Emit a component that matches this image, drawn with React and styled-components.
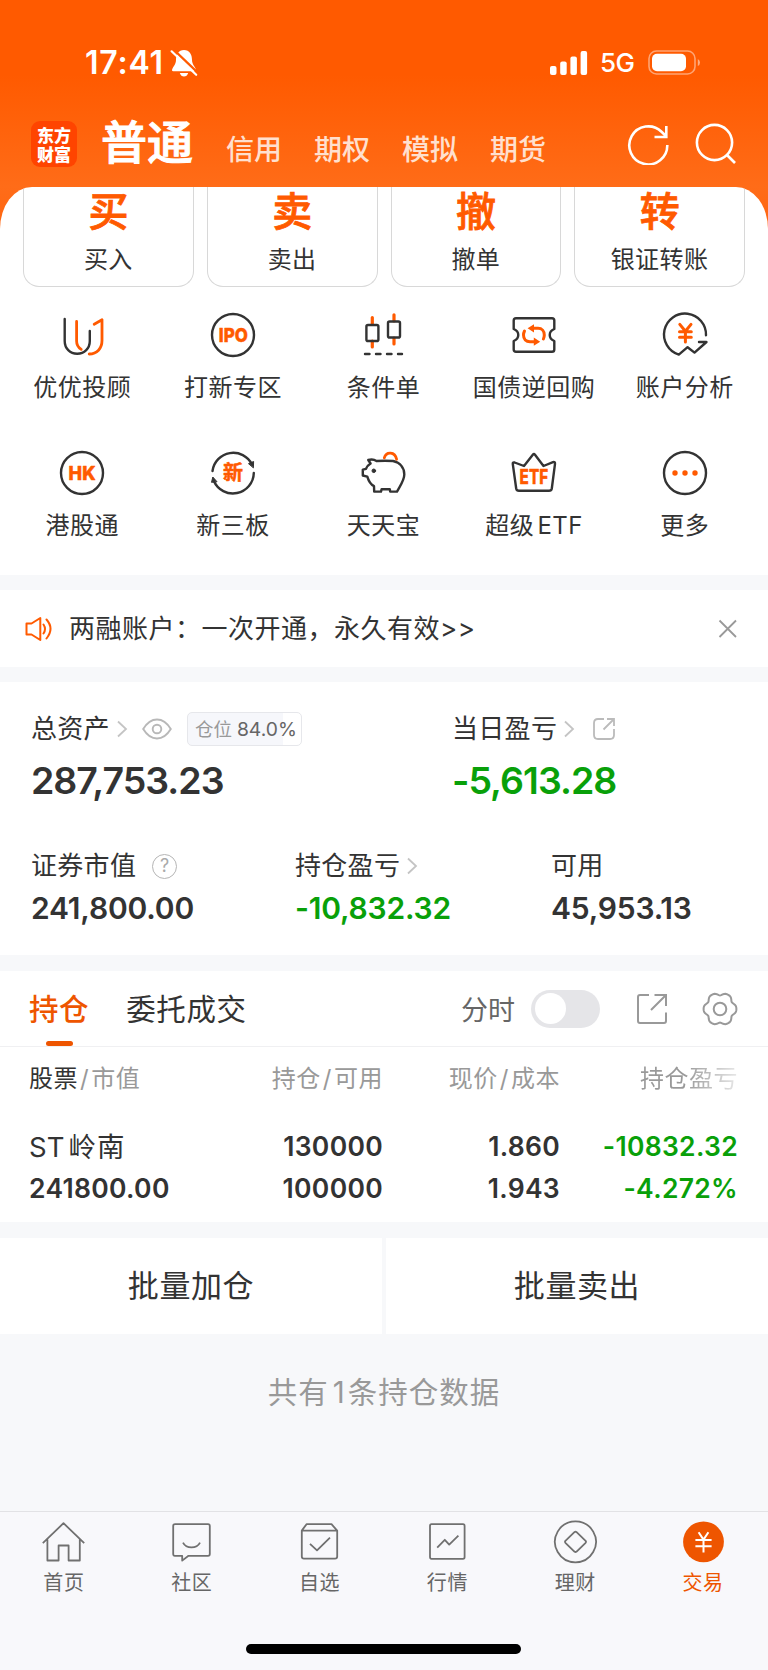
import React from 'react'
import { useState } from 'react'
import styled, { createGlobalStyle } from 'styled-components'

const orange = '#ff5a00'
const dark = '#333333'

const actions = [
  { mark: '买', label: '买入' },
  { mark: '卖', label: '卖出' },
  { mark: '撤', label: '撤单' },
  { mark: '转', label: '银证转账' },
]

const markets = ['信用', '期权', '模拟', '期货']

const CircleText = ({ text, width, x }) => (
  <>
    <circle cx="24" cy="24" r="21" stroke={dark} />
    <text x={x} y="31" textLength={width} lengthAdjust="spacingAndGlyphs" fontFamily="Inter, sans-serif" fontWeight="800" fontSize="19" fill={orange} stroke={orange} strokeWidth=".5">{text}</text>
  </>
)

const services = [
  {
    label: '优优投顾',
    icon: (
      <>
        <path d="M6.7 8V30C6.7 37.5 12 42.8 19.2 42.8S31.8 37.5 31.8 30V20" stroke={dark} />
        <path d="M18.6 10.5V30C18.6 34 20.4 36.6 23.2 38.4M36.2 13.2L44 8.8V29.5C44 37.5 39 42.8 31.2 43" stroke={orange} strokeWidth="2.8" />
      </>
    ),
  },
  { label: '打新专区', icon: <CircleText text="IPO" x="9.8" width="29" /> },
  {
    label: '条件单',
    icon: (
      <>
        <path d="M13.3 6.5V13M13.3 30V36M35 3.8V10M35 27V33" stroke={orange} strokeWidth="3.2" />
        <rect x="7.4" y="14" width="12" height="16" rx="1.6" stroke={dark} />
        <rect x="29" y="10.5" width="12" height="16" rx="1.6" stroke={dark} />
        <path d="M6 43H10.5M17 43H21.5M28 43H32.5M39 43H43" stroke={dark} strokeWidth="2.4" />
      </>
    ),
  },
  {
    label: '国债逆回购',
    icon: (
      <>
        <path d="M6 7.2H42Q44.3 7.2 44.3 9.5V18C38.2 20.5 38.2 27.5 44.3 30V38.5Q44.3 40.8 42 40.8H6Q3.7 40.8 3.7 38.5V30C9.8 27.5 9.8 20.5 3.7 18V9.5Q3.7 7.2 6 7.2Z" stroke={dark} />
        <g fill={orange} stroke="none">
          <path d="M17.6 17.3L24 13.2V21.4ZM30.2 30.7L23.8 26.6V34.8Z" />
        </g>
        <path d="M23 17.3H28C32 17.3 34.3 20 34.3 24Q34.3 26 33.4 28M25 30.7H20C16 30.7 13.5 28 13.5 24Q13.5 22 14.5 20" stroke={orange} strokeWidth="3" />
      </>
    ),
  },
  {
    label: '账户分析',
    icon: (
      <>
        <path d="M45 24.3A21 21 0 1 0 17.8 43.6L26.6 36.2L33.5 41.6L45.5 31H38" stroke={dark} />
        <path d="M18.8 13.4L24.4 20.3L30 13.4M24.4 20V31M18.5 20.8H30.3M18.5 26.3H30.3" stroke={orange} strokeWidth="3" />
      </>
    ),
  },
  { label: '港股通', icon: <CircleText text="HK" x="10.6" width="27" /> },
  {
    label: '新三板',
    icon: (
      <>
        <path d="M3.5 22A20.9 20.9 0 0 1 43 15.5M44.8 24A20.9 20.9 0 0 1 4.8 32" stroke={dark} />
        <path d="M39.8 14.5L44.6 12.5L44.4 18.5ZM2.6 33L3.8 28L7.8 32.5Z" fill={dark} stroke={dark} strokeWidth="1" />
        <text x="14" y="31.2" fontFamily="'Noto Sans CJK SC', sans-serif" fontWeight="700" fontSize="20" fill={orange} stroke={orange} strokeWidth=".5">新</text>
      </>
    ),
  },
  {
    label: '天天宝',
    icon: (
      <>
        <path d="M9.2 11Q14 9.5 17.5 12Q26 11.5 34 12C41.5 13.5 45.3 19 45.3 25.500C45.3 31 42.5 34.5 38 42.6H31.2L30.8 40.2H22.6L22 42.6H15.2L15 37.2Q10.5 35 8.3 27.7L3.8 26.5V20.6L7 19.8Q8.3 16.5 11.6 14.5Z" stroke={dark} />
        <circle cx="14.8" cy="21.8" r="1.8" fill={dark} stroke={dark} strokeWidth="1" />
        <path d="M25.3 8.8C27.2 2.3 36 2.4 37.6 10.3" stroke={orange} strokeWidth="2.8" />
      </>
    ),
  },
  {
    label: '超级 ETF',
    icon: (
      <>
        <path d="M4.6 13.5L14 17L22.8 5.8Q24 4.3 25 5.8L33.5 17L43 13.2Q45.2 12.6 45 14.8L41.8 39.5Q41.4 41.8 39 41.8H9Q6.6 41.8 6.2 39.5L2.8 15.2Q2.4 12.8 4.6 13.5Z" stroke={dark} />
        <text x="9.6" y="34.8" textLength="28.5" lengthAdjust="spacingAndGlyphs" fontFamily="Inter, sans-serif" fontWeight="800" fontSize="20" fill={orange} stroke={orange} strokeWidth=".4">ETF</text>
      </>
    ),
  },
  {
    label: '更多',
    icon: (
      <>
        <circle cx="24" cy="24" r="21" stroke={dark} />
        <g fill={orange} stroke="none">
          <circle cx="14" cy="24" r="2.7" />
          <circle cx="24" cy="24" r="2.7" />
          <circle cx="34" cy="24" r="2.7" />
        </g>
      </>
    ),
  },
]

const tabs = [
  { label: '首页', icon: <path d="M1.8 23.2L22.5 3.2L43.2 23.2M6.4 19.5V40.5H17.6V25.5H27.6V40.5H38.8V19.5" /> },
  { label: '社区', icon: <path d="M5.5 4.2H39Q40.8 4.2 40.8 6V34Q40.8 35.8 39 35.8H19.5L13.2 40.6V35.8H5.8Q4.2 35.8 4.2 34V6Q4.2 4.2 6 4.2M14 22.6Q16.5 27.4 22.5 27.4T31 22.6" /> },
  { label: '自选', icon: <path d="M9.5 4.2H34.5L40.2 10.6V36.5Q40.2 38.6 38 38.6H7Q4.8 38.6 4.8 36.5V10.6ZM4.8 10.6H40.2M13 23.8L20 30.4L33 17.6" /> },
  { label: '行情', icon: <path d="M6.5 4.2H38Q39.6 4.2 39.6 6V37Q39.6 38.8 38 38.8H6.5Q5 38.8 5 37V6Q5 4.2 6.5 4.2M12.2 27.6L19.8 19.8L24.2 24.6L33.4 15.6" /> },
  { label: '理财', icon: <path d="M22.5 1.3A20.5 20.5 0 1 1 22.4 1.3ZM21.4 12.2L12.4 20.8Q11.6 21.8 12.4 22.8L21.4 31.6Q22.5 32.4 23.6 31.6L32.6 22.8Q33.4 21.8 32.6 20.8L23.6 12.2Q22.5 11.2 21.4 12.2Z" /> },
  {
    label: '交易',
    active: true,
    icon: (
      <>
        <circle cx="22.5" cy="21.8" r="20.4" fill="#ee5500" stroke="none" />
        <path d="M17.6 12.2L22.5 19.6L27.4 12.2M22.5 19.5V32.6M14.4 20H30.6M14.4 26.2H30.6" stroke="#fff" strokeWidth="2" />
      </>
    ),
  },
]

// outline with six rounded teeth
const gearPath = () => {
  const points = []
  for (let a = 0; a < 360; a += 5) {
    const t = (a * Math.PI) / 180
    const r = 15.3 + 1.4 * Math.cos(6 * t) - 0.3 * Math.cos(12 * t)
    points.push(`${(18 + r * Math.cos(t)).toFixed(2)} ${(18 + r * Math.sin(t)).toFixed(2)}`)
  }
  return `M${points.join('L')}Z`
}

const Chevron = () => (
  <ChevronSvg viewBox="0 0 12 18"><path d="M2 1.5L10 9L2 16.5" /></ChevronSvg>
)

function StatusBar() {
  return (
    <Status>
      <Clock>17:41</Clock>
      <svg width="28" height="30" viewBox="0 0 28 30">
        <path d="M14 2C8.5 2 6 6.5 6 12C6 17 2 19.5 2 22.2Q2 23.3 3.3 23.3H24.7Q26 23.3 26 22.2C26 19.5 22 17 22 12C22 6.5 19.5 2 14 2ZM9.8 25H18.2Q17 28.500 14 28.500T9.800 25Z" fill="#fff" />
        <path d="M3.5 1.5L28.5 25.5" stroke="#ff5a00" strokeWidth="2.4" />
        <path d="M1.6 3.3L26.2 26.8" stroke="#fff" strokeWidth="2.2" strokeLinecap="round" />
      </svg>
      <StatusRight>
        <svg width="38" height="24" viewBox="0 0 38 24" fill="#fff">
          <rect x="0" y="15" width="6.5" height="9" rx="2" />
          <rect x="10.2" y="10.5" width="6.5" height="13.5" rx="2" />
          <rect x="20.4" y="5.5" width="6.5" height="18.5" rx="2" />
          <rect x="30.6" y="0" width="6.5" height="24" rx="2" />
        </svg>
        <Network>5G</Network>
        <svg width="53" height="26" viewBox="0 0 53 26">
          <rect x="1" y="1" width="46" height="23" rx="7.5" fill="none" stroke="#fff" strokeOpacity=".45" strokeWidth="1.6" />
          <rect x="4" y="3.8" width="34" height="17.4" rx="5" fill="#fff" />
          <path d="M49.8 9V16Q52 15 52 12.5T49.8 9Z" fill="#fff" fillOpacity=".5" />
        </svg>
      </StatusRight>
    </Status>
  )
}

function App() {
  const [chartOn, setChartOn] = useState(false)
  const position = 84

  return (
    <Page>
      <GlobalStyle />

      <Header>
        <StatusBar />
        <NavRow>
          <Logo>东方财富</Logo>
          <CurrentMarket>普通</CurrentMarket>
          {markets.map((m) => <Market key={m}>{m}</Market>)}
          <NavIcons>
            <svg width="42" height="42" viewBox="0 0 42 42">
              <path d="M40.3 22A19 19 0 1 1 34.5 8.7L38.5 12.5M39.3 3V14H27.5" />
            </svg>
            <svg width="42" height="42" viewBox="0 0 42 42">
              <circle cx="19.5" cy="19.5" r="17.6" />
              <path d="M32 32L40 40" />
            </svg>
          </NavIcons>
        </NavRow>
      </Header>

      <Shoulder>
        <TopPanel>
          <Actions>
            {actions.map((a) => (
              <ActionCard key={a.label}>
                <ActionMark>{a.mark}</ActionMark>
                <ActionLabel>{a.label}</ActionLabel>
              </ActionCard>
            ))}
          </Actions>
          <Services>
            {services.map((s) => (
              <Service key={s.label}>
                <svg width="48" height="48" viewBox="0 0 48 48">{s.icon}</svg>
                <ServiceLabel>{s.label}</ServiceLabel>
              </Service>
            ))}
          </Services>
        </TopPanel>
      </Shoulder>

      <Notice>
        <svg width="28" height="26" viewBox="0 0 28 26" fill="none" stroke={orange} strokeWidth="2" strokeLinejoin="round" strokeLinecap="round">
          <path d="M1.5 7.5H6.5L15.3 2V24L6.5 18.5H1.5ZM18.5 8.5Q21.5 13 18.5 17.5M21.5 3.5Q29.5 12.5 21.5 22.5" />
        </svg>
        <NoticeText>两融账户：一次开通，永久有效&gt;&gt;</NoticeText>
        <svg width="20" height="20" viewBox="0 0 20 20" fill="none" stroke="#999" strokeWidth="1.8">
          <path d="M1.5 1.5L18 18M18 1.5L1.5 18" />
        </svg>
      </Notice>

      <Assets>
        <TotalRow>
          <div>
            <AssetLabel>
              总资产<Chevron />
              <Eye viewBox="0 0 30 22">
                <path d="M1.2 11Q7 1.5 15 1.5T28.8 11Q23 20.5 15 20.5T1.2 11Z" />
                <circle cx="15" cy="11" r="4.3" />
              </Eye>
              <Badge $fill={position}>仓位<b>{position.toFixed(1)}%</b></Badge>
            </AssetLabel>
            <BigValue>287,753.23</BigValue>
          </div>
          <div>
            <AssetLabel>
              当日盈亏<Chevron />
              <ShareSvg viewBox="0 0 24 24">
                <path d="M12 2H6Q2 2 2 6V18Q2 22 6 22H18Q22 22 22 18V12M11.5 12.5L21.5 2.5M15 2H22V9" />
              </ShareSvg>
            </AssetLabel>
            <BigValue $down>-5,613.28</BigValue>
          </div>
        </TotalRow>
        <DetailRow>
          <div>
            <AssetLabel>证券市值<Help>?</Help></AssetLabel>
            <Value>241,800.00</Value>
          </div>
          <div>
            <AssetLabel>持仓盈亏<Chevron /></AssetLabel>
            <Value $down>-10,832.32</Value>
          </div>
          <div>
            <AssetLabel>可用</AssetLabel>
            <Value>45,953.13</Value>
          </div>
        </DetailRow>
      </Assets>

      <Holdings>
        <HoldingTabs>
          <HoldingTab $active>持仓</HoldingTab>
          <HoldingTab>委托成交</HoldingTab>
          <Tools>
            <span>分时</span>
            <Toggle type="button" $on={chartOn} onClick={() => setChartOn(!chartOn)} />
            <svg width="32" height="32" viewBox="0 0 32 32">
              <path d="M13 2H4Q2 2 2 4V28Q2 30 4 30H28Q30 30 30 28V19.5M15 17L29.5 2.5M18.5 2H30V13" />
            </svg>
            <svg width="36" height="36" viewBox="0 0 36 36">
              <path d={gearPath()} />
              <circle cx="18" cy="18" r="6.3" />
            </svg>
          </Tools>
        </HoldingTabs>
        <TableHead>
          <span><em>股票</em><i>/</i>市值</span>
          <span>持仓<i>/</i>可用</span>
          <span>现价<i>/</i>成本</span>
          <Faded>持仓盈亏</Faded>
        </TableHead>
        <TableRow>
          <StockName>ST<span>岭南</span></StockName>
          <Cell>130000</Cell>
          <Cell>1.860</Cell>
          <Cell $down>-10832.32</Cell>
        </TableRow>
        <TableRow>
          <Cell>241800.00</Cell>
          <Cell>100000</Cell>
          <Cell>1.943</Cell>
          <Cell $down>-4.272%</Cell>
        </TableRow>
      </Holdings>

      <BatchRow>
        <BatchButton type="button">批量加仓</BatchButton>
        <BatchButton type="button">批量卖出</BatchButton>
      </BatchRow>

      <Summary>共有<span>1</span>条持仓数据</Summary>

      <TabBar>
        {tabs.map((t) => (
          <Tab key={t.label} $active={t.active}>
            <svg width="45" height="44" viewBox="0 0 45 44">{t.icon}</svg>
            <span>{t.label}</span>
          </Tab>
        ))}
      </TabBar>
      <HomeArea><HomeIndicator /></HomeArea>
    </Page>
  )
}

const GlobalStyle = createGlobalStyle`
* { box-sizing: border-box; }
body {
  margin: 0;
  background: #f7f8fa;
}
svg {
  flex: none;
  display: block;
}
button {
  border: none;
  padding: 0;
  font: inherit;
  color: inherit;
}
`;

const Page = styled.div`
width: 768px;
height: 1670px;
display: flex;
flex-direction: column;
overflow: hidden;
background: #f7f8fa;
color: #333;
font-family: Inter, "Noto Sans CJK SC", sans-serif;
white-space: nowrap;
`;

const Header = styled.header`
height: 187px;
flex: none;
background: linear-gradient(#ff5a00 0, #ff5a00 75px, #ff6c18 187px);
color: #fff;
`;

const Status = styled.div`
height: 99px;
padding: 26px 67px 0 85px;
display: flex;
align-items: center;
`;

const Clock = styled.div`
width: 85px;
font-size: 32px;
font-weight: 600;
letter-spacing: 0.8px;
`;

const StatusRight = styled.div`
margin-left: auto;
display: flex;
align-items: center;
`;

const Network = styled.div`
width: 60px;
padding-left: 12px;
font-size: 26px;
font-weight: 500;
letter-spacing: -0.5px;
`;

const NavRow = styled.nav`
height: 88px;
padding: 1px 31px 0 31px;
display: flex;
align-items: center;
`;

const Logo = styled.div`
width: 46px;
height: 46px;
padding: 4px 6px;
border-radius: 9px;
background: #ff4400;
font: 900 17px/19px "Noto Sans CJK SC", sans-serif;
white-space: normal;
word-break: break-all;
`;

const CurrentMarket = styled.div`
width: 101px;
margin: -4px 24px 0 24px;
font-size: 46px;
font-weight: 500;
line-height: 60px;
-webkit-text-stroke: 1px #fff;
`;

const Market = styled.div`
width: 88px;
padding-top: 13px;
font-size: 28px;
font-weight: 500;
line-height: 40px;
color: #ffe0cf;
`;

const NavIcons = styled.div`
margin-left: auto;
display: flex;
gap: 26px;
svg {
  fill: none;
  stroke: #fff;
  stroke-width: 2.6;
}
`;

const Shoulder = styled.div`
flex: none;
height: 388px;
background: linear-gradient(#ff6c18, #ff6510 44px, #ffffff 45px);
`;

const TopPanel = styled.section`
height: 388px;
border-radius: 32px 32px 0 0 / 42px 42px 0 0;
background: #fff;
overflow: hidden;
`;

const Actions = styled.div`
height: 100px;
padding: 0 23px;
display: grid;
grid-template-columns: repeat(4, 1fr);
gap: 13px;
`;

const ActionCard = styled.div`
padding-top: 1px;
border: 1.5px solid #d8d8d8;
border-top: none;
border-radius: 0 0 16px 16px;
display: flex;
flex-direction: column;
align-items: center;
`;

const ActionMark = styled.div`
height: 48px;
font-size: 40px;
font-weight: 500;
line-height: 48px;
color: #ff5a00;
-webkit-text-stroke: 0.8px #ff5a00;
`;

const ActionLabel = styled.div`
font-size: 24px;
line-height: 48px;
letter-spacing: 0.5px;
`;

const Services = styled.div`
padding: 24px 8px 0 7px;
display: grid;
grid-template-columns: repeat(5, 1fr);
grid-auto-rows: 137.5px;
`;

const Service = styled.div`
display: flex;
flex-direction: column;
align-items: center;
svg {
  fill: none;
  stroke-width: 2.4;
  stroke-linecap: round;
  stroke-linejoin: round;
}
`;

const ServiceLabel = styled.div`
margin-top: 9px;
font-size: 24px;
line-height: 40px;
letter-spacing: 0.5px;
word-spacing: -4px;
`;

const Notice = styled.section`
flex: none;
height: 77px;
margin-top: 15px;
padding: 0 30px 0 25px;
background: #fff;
display: flex;
align-items: center;
`;

const NoticeText = styled.div`
flex: 1;
margin-left: 16px;
font-size: 26px;
line-height: 40px;
letter-spacing: 0.5px;
`;

const Assets = styled.section`
flex: none;
height: 273px;
margin-top: 15px;
padding: 25px 31px 0;
background: #fff;
`;

const TotalRow = styled.div`
height: 137px;
display: grid;
grid-template-columns: 421px 1fr;
`;

const DetailRow = styled.div`
display: grid;
grid-template-columns: 264px 256px 1fr;
`;

const AssetLabel = styled.div`
height: 44px;
display: flex;
align-items: center;
font-size: 26px;
line-height: 44px;
letter-spacing: 0.3px;
`;

const ChevronSvg = styled.svg`
width: 12px;
height: 18px;
margin-left: 6px;
fill: none;
stroke: #c4c4c4;
stroke-width: 1.8;
`;

const Eye = styled.svg`
width: 30px;
height: 22px;
margin-left: 14px;
fill: none;
stroke: #b8b8b8;
stroke-width: 1.9;
`;

const ShareSvg = styled.svg`
width: 24px;
height: 24px;
margin-left: 17px;
fill: none;
stroke: #bbb;
stroke-width: 1.8;
`;

const Badge = styled.div`
width: 115px;
height: 34px;
margin-left: 15px;
padding-left: 7px;
border: 1.5px solid #e6e7eb;
border-radius: 5px;
background: linear-gradient(to right, #f6f7fb ${(p) => p.$fill}%, #fff ${(p) => p.$fill}%);
display: flex;
align-items: center;
font-size: 18.5px;
line-height: 32px;
letter-spacing: 0;
color: #999;
b {
  margin-left: 5px;
  font-size: 19.3px;
  font-weight: 400;
  color: #666;
}
`;

const Help = styled.div`
width: 25px;
height: 25px;
margin-left: 16px;
border: 1.8px solid #b5b5b5;
border-radius: 50%;
font-size: 18px;
line-height: 22px;
text-align: center;
color: #aaa;
`;

const BigValue = styled.div`
height: 60px;
font-size: 37.5px;
font-weight: 600;
line-height: 60px;
letter-spacing: -1px;
color: ${(p) => (p.$down ? '#09a009' : '#333')};
`;

const Value = styled.div`
font-size: 30px;
font-weight: 600;
line-height: 41px;
letter-spacing: -0.2px;
color: ${(p) => (p.$down ? '#09a009' : '#333')};
`;

const Holdings = styled.section`
flex: none;
height: 251px;
margin-top: 16px;
background: #fff;
`;

const HoldingTabs = styled.div`
height: 76px;
padding: 0 30px 0 29px;
border-bottom: 1px solid #f0f0f2;
display: flex;
`;

const HoldingTab = styled.div`
margin-right: 37px;
display: flex;
flex-direction: column;
align-items: center;
font-size: 29.5px;
font-weight: ${(p) => (p.$active ? 500 : 400)};
line-height: 76px;
letter-spacing: 0.6px;
color: ${(p) => (p.$active ? '#ee5500' : '#333')};
&::after {
  content: '';
  width: 27px;
  height: 6px;
  margin-top: -6px;
  border-radius: 3px;
  background: ${(p) => (p.$active ? '#ee5500' : 'transparent')};
}
`;

const Tools = styled.div`
margin-left: auto;
display: flex;
align-items: center;
font-size: 27px;
color: #666;
svg {
  fill: none;
  stroke: #999;
  stroke-width: 2;
}
svg:last-child {
  margin-left: 34px;
}
`;

const Toggle = styled.button`
width: 69px;
height: 38px;
margin: 0 36px 0 16px;
padding: 0 4px;
border-radius: 19px;
background: ${(p) => (p.$on ? '#ee5500' : '#e5e5e8')};
display: flex;
align-items: center;
justify-content: ${(p) => (p.$on ? 'flex-end' : 'flex-start')};
&::before {
  content: '';
  width: 31px;
  height: 31px;
  border-radius: 50%;
  background: #fff;
}
`;

const TableHead = styled.div`
height: 79px;
padding: 10px 30px 0 29px;
display: grid;
grid-template-columns: 174px 180px 177px 1fr;
text-align: right;
font-size: 24px;
line-height: 44px;
letter-spacing: 0.5px;
color: #999;
> :first-child {
  text-align: left;
}
em {
  font-style: normal;
  color: #333;
}
i {
  padding: 0 2px;
  font-style: normal;
}
`;

const Faded = styled.span`
background: linear-gradient(to right, #999 70%, #e8e8e8 100%);
background-clip: text;
color: transparent;
`;

const TableRow = styled.div`
height: 41.5px;
padding: 0 30px 0 29px;
display: grid;
grid-template-columns: 174px 180px 177px 1fr;
`;

const StockName = styled.div`
font-size: 27.5px;
line-height: 42px;
span {
  margin-left: 4px;
  letter-spacing: 1px;
}
`;

const Cell = styled.div`
font-size: 26.5px;
font-weight: 600;
line-height: 41px;
letter-spacing: 0.3px;
text-align: right;
color: ${(p) => (p.$down ? '#09a009' : '#333')};
&:first-child {
  text-align: left;
}
`;

const BatchRow = styled.div`
flex: none;
height: 96px;
margin-top: 16px;
display: grid;
grid-template-columns: 1fr 1fr;
gap: 4px;
`;

const BatchButton = styled.button`
background: #fff;
font-size: 31px;
line-height: 60px;
letter-spacing: 0.6px;
`;

const Summary = styled.div`
flex: 1;
padding-top: 37px;
font-size: 29.5px;
line-height: 42px;
letter-spacing: 1px;
text-align: center;
color: #999;
span {
  margin: 0 2px 0 4px;
}
`;

const TabBar = styled.nav`
flex: none;
height: 97px;
padding: 8px 1px 0 0;
border-top: 1px solid #e2e2e5;
background: #f8f8fb;
display: grid;
grid-template-columns: repeat(6, 1fr);
`;

const Tab = styled.div`
display: flex;
flex-direction: column;
align-items: center;
font-size: 20px;
line-height: 38px;
letter-spacing: 0.6px;
color: ${(p) => (p.$active ? '#ee5500' : '#666')};
svg {
  fill: none;
  stroke: #707070;
  stroke-width: 1.8;
  stroke-linejoin: round;
}
`;

const HomeArea = styled.div`
flex: none;
height: 62px;
padding: 36px 1px 0 0;
background: #f8f8fb;
`;

const HomeIndicator = styled.div`
width: 275px;
height: 10px;
margin: 0 auto;
border-radius: 5px;
background: #000;
`;

export default App
